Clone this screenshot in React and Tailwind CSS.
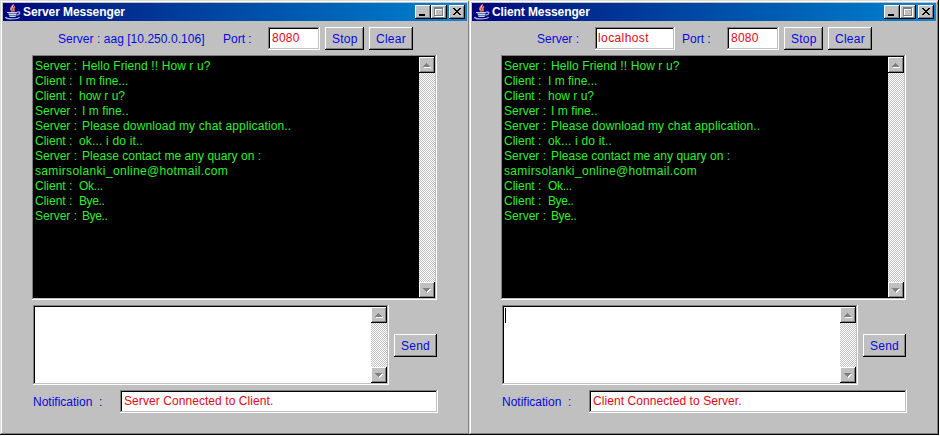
import React from "react";

const sunken =
  "shadow-[inset_-1px_-1px_0_#fff,inset_1px_1px_0_#808080,inset_-2px_-2px_0_#c0c0c0,inset_2px_2px_0_#000]";
const raised =
  "bg-[#c0c0c0] shadow-[inset_-1px_-1px_0_#000,inset_1px_1px_0_#fff,inset_-2px_-2px_0_#808080]";

const messages = [
  { from: "Server", text: "Hello Friend !! How r u?", tracking: "tracking-[0.1px]" },
  { from: "Client", text: "I m fine...", tracking: "tracking-normal" },
  { from: "Client", text: "how r u?", tracking: "tracking-normal" },
  { from: "Server", text: "I m fine..", tracking: "tracking-[0.06px]" },
  { from: "Server", text: "Please download my chat application..", tracking: "tracking-[0.14px]" },
  { from: "Client", text: "ok... i do it..", tracking: "tracking-[0.18px]" },
  { from: "Server", text: "Please contact me any quary on :", tracking: "tracking-[0.03px]" },
  { text: "samirsolanki_online@hotmail.com", tracking: "tracking-[0.35px]" },
  { from: "Client", text: "Ok...", tracking: "tracking-[-0.3px]" },
  { from: "Client", text: "Bye..", tracking: "tracking-[-0.4px]" },
  { from: "Server", text: "Bye..", tracking: "tracking-[-0.4px]" },
];

function JavaCup() {
  return (
    <svg width="16" height="16" viewBox="0 0 16 16" className="shrink-0" fill="none">
      <path d="M8 0.3C9 2.3 5 3.5 6 5.5L7.5 7.5M10 2.5C7.5 4 9.5 5 8.7 7.5" stroke="#ec7866" strokeWidth="1.8" />
      <path d="M7.5 1.5L6.8 6" stroke="#f8d0c4" strokeWidth="0.8" />
      <path d="M2.5 8.5H12L11 12.5H4.5Z" fill="#6474ac" />
      <path d="M2 8.5H12M4 10.5H11M4.5 12.5H10.5" stroke="#c8d0ec" strokeWidth="1.1" />
      <path d="M12 8.2C15.8 7.2 15.8 10.5 11.5 11.2" stroke="#a0acd8" strokeWidth="1.3" />
      <path d="M0.5 13C1 15.5 13 15.5 14.5 13" stroke="#a4b0dc" strokeWidth="1.4" />
    </svg>
  );
}

function CaptionButton({ kind }) {
  return (
    <div className={"flex h-[14px] w-[16px] shrink-0 " + raised}>
      <svg width="16" height="14" viewBox="0 0 16 14" shapeRendering="crispEdges" fill="none">
        {kind === "min" && <path d="M4 9h6v2H4z" fill="#000" />}
        {kind === "max" && (
          <>
            <path d="M4 3h9v9H4z" fill="#fff" />
            <path d="M3 2h9v9H3z" fill="#808080" />
            <path d="M4 4h7v6H4z" fill="#c0c0c0" />
            <path d="M4 4h7v1H5v5H4z" fill="#fff" />
          </>
        )}
        {kind === "close" && (
          <path
            d="M4 3h2v1H4zM10 3h2v1h-2zM5 4h2v1H5zM9 4h2v1H9zM6 5h4v1H6zM7 6h2v1H7zM6 7h4v1H6zM5 8h2v1H5zM9 8h2v1H9zM4 9h2v1H4zM10 9h2v1h-2z"
            fill="#000"
          />
        )}
      </svg>
    </div>
  );
}

function ArrowButton({ down }) {
  return (
    <div className={"flex h-4 w-4 shrink-0 " + raised}>
      <svg width="16" height="16" viewBox="0 0 16 16" shapeRendering="crispEdges">
        {down ? (
          <>
            <path d="M5 7h7v1h-1v1h-1v1H9v1H8v-1H7V9H6V8H5z" fill="#fff" />
            <path d="M4 6h7v1h-1v1H9v1H8v1H7V9H6V8H5V7H4z" fill="#808080" />
          </>
        ) : (
          <>
            <path d="M5 10h7v1H5z" fill="#fff" />
            <path d="M7 6h1v1h1v1h1v1h1v1H4V9h1V8h1V7h1z" fill="#808080" />
          </>
        )}
      </svg>
    </div>
  );
}

function ScrollBar() {
  return (
    <div className="flex w-4 shrink-0 flex-col justify-between bg-[repeating-conic-gradient(#fff_0_25%,#c0c0c0_0_50%)] bg-[length:2px_2px]">
      <ArrowButton />
      <ArrowButton down />
    </div>
  );
}

function Button({ className, children }) {
  return (
    <button
      className={
        "h-[23px] shrink-0 pt-px pl-[7px] text-left leading-[23px] tracking-[0.25px] text-[#0808dc] " +
        raised +
        " " +
        className
      }
    >
      {children}
    </button>
  );
}

function Field({ className, children }) {
  return (
    <div className={"h-[23px] shrink-0 bg-white pl-1 leading-[23px] text-[#dc0818] " + sunken + " " + className}>
      {children}
    </div>
  );
}

function MessengerWindow({ title, toolbar, notification, caret, className }) {
  return (
    <section
      className={
        "flex h-[435px] w-[470px] shrink-0 flex-col bg-[#c0c0c0] px-[3px] pt-[3px] shadow-[inset_-1px_-1px_0_#000,inset_1px_1px_0_#dcdcdc,inset_-2px_-2px_0_#808080,inset_2px_2px_0_#fff] " +
        className
      }
    >
      <header className="flex h-[18px] w-[464px] shrink-0 items-center bg-linear-to-r from-[#00007c] to-[#1084d0] pr-[2px] pl-[2px]">
        <JavaCup />
        <h1 className="ml-[2px] flex-1 text-[12px] font-bold tracking-[-0.1px] text-white">{title}</h1>
        <CaptionButton kind="min" />
        <CaptionButton kind="max" />
        <div className="w-[2px]" />
        <CaptionButton kind="close" />
      </header>
      <div className="mt-[6px] flex h-[23px] shrink-0 leading-[25px] text-[#0808dc]">{toolbar}</div>
      <div className={"mt-[5px] ml-[29px] flex h-[245px] w-[405px] shrink-0 bg-black p-[2px] " + sunken}>
        <div className="flex-1 pt-[2px] pl-[1px] text-[#30ee30]">
          {messages.map(({ from, text, tracking }, i) => (
            <p key={i} className="flex h-[15px] leading-[15px]">
              {from && <span className={from === "Server" ? "w-[47px]" : "w-[44px]"}>{from + " :"}</span>}
              <span className={tracking}>{text}</span>
            </p>
          ))}
        </div>
        <ScrollBar />
      </div>
      <div className="mt-[5px] ml-[30px] flex h-[80px] shrink-0 items-center gap-[5px]">
        <div className={"flex h-[80px] w-[356px] bg-white p-[2px] " + sunken}>
          <div className="flex-1 pt-[1px] pl-[1px]">{caret && <div className="h-[15px] w-px bg-black" />}</div>
          <ScrollBar />
        </div>
        <Button className="w-[43px]">Send</Button>
      </div>
      <div className="mt-[5px] ml-[30px] flex h-[23px] shrink-0 leading-[25px] text-[#0808dc]">
        <span className="w-[87px]">Notification  :</span>
        <Field className="w-[318px] tracking-[0.07px]">{notification}</Field>
      </div>
    </section>
  );
}

export default function App() {
  return (
    <main className="flex h-[436px] w-[940px] overflow-hidden bg-white font-['Liberation_Sans',Arial,sans-serif] text-[12px] leading-[23px] whitespace-pre">
      <MessengerWindow
        title="Server Messenger"
        notification="Server Connected to Client."
        toolbar={
          <>
            <span className="ml-[55px] w-[165px] tracking-[0.04px]">Server : aag [10.250.0.106]</span>
            <span className="w-[45px]">Port :</span>
            <Field className="w-[52px] tracking-[0.25px]">8080</Field>
            <Button className="ml-[5px] w-[39px]">Stop</Button>
            <Button className="ml-[5px] w-[44px]">Clear</Button>
          </>
        }
      />
      <MessengerWindow
        className="-ml-px"
        title="Client Messenger"
        notification="Client Connected to Server."
        caret
        toolbar={
          <>
            <span className="ml-[65px] w-[58px]">Server :</span>
            <Field className="w-[80px] pl-[3px] tracking-[0.4px]">localhost</Field>
            <span className="ml-[7px] w-[45px]">Port :</span>
            <Field className="w-[52px] tracking-[0.25px]">8080</Field>
            <Button className="ml-[5px] w-[39px]">Stop</Button>
            <Button className="ml-[5px] w-[44px]">Clear</Button>
          </>
        }
      />
    </main>
  );
}
